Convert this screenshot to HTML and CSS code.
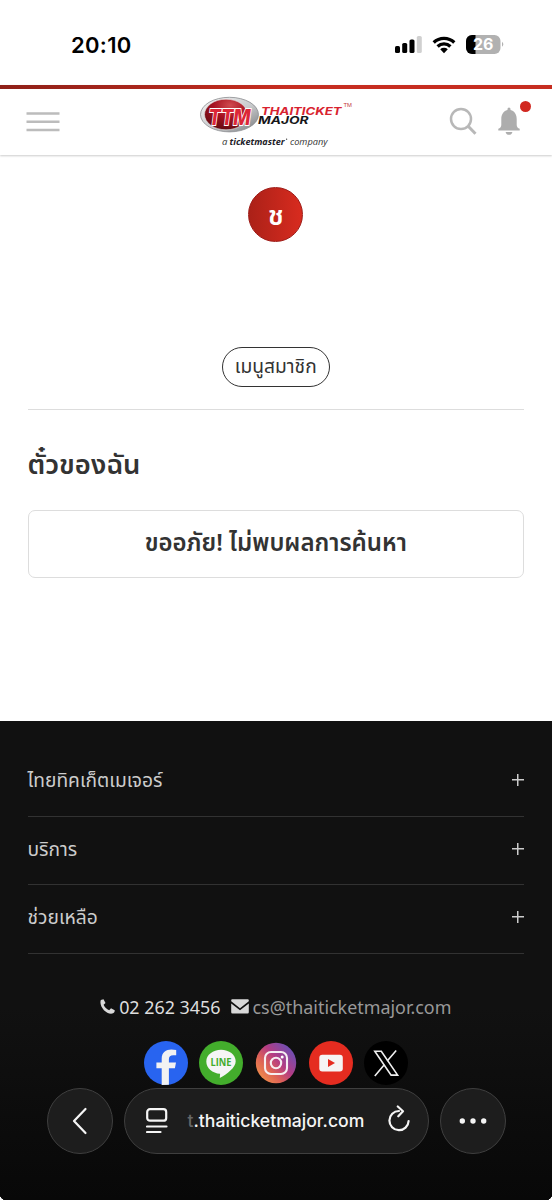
FILE: index.html
```html
<!DOCTYPE html>
<html lang="th">
<head>
<meta charset="utf-8">
<meta name="viewport" content="width=device-width">
<title>ThaiTicketMajor</title>
<link rel="stylesheet" href="styles.css">
</head>
<body>
<div class="screen">
  <div class="status">
    <span class="time">20:10</span>
    <div class="status-icons">
      <svg class="signal" width="28" height="19" viewBox="0 0 28 19"><rect x="0" y="11" width="5" height="7" rx="1.6"/><rect x="7.2" y="8" width="5" height="10" rx="1.6"/><rect x="14.5" y="4.5" width="5" height="13.5" rx="1.6"/><rect x="21.8" y="1" width="5" height="17" rx="1.6" fill="#d0d0d0"/></svg>
      <svg class="wifi" width="24" height="18" viewBox="0 0 24 18"><g fill="none" stroke="#000" stroke-width="3.3"><path d="M1.7 6.5a14.8 14.8 0 0 1 20.6 0"/><path d="M5.6 10.5a9.2 9.2 0 0 1 12.8 0"/></g><path d="M8.2 13.2a5.6 5.6 0 0 1 7.6 0L12 17.2z"/></svg>
      <svg class="battery" width="39" height="20" viewBox="0 0 39 20"><defs><clipPath id="bat"><rect width="34.5" height="19" rx="6"/></clipPath></defs><g clip-path="url(#bat)"><rect width="35" height="19" fill="#b1b1b1"/><rect width="9.5" height="19"/></g><path d="M36 6.800q2.700 2.500 0 5z" fill="#b1b1b1"/><text x="17.2" y="15.3" text-anchor="middle" class="bat-num">26</text></svg>
    </div>
  </div>
  <header class="header">
    <svg class="menu" width="34" height="22" viewBox="0 0 34 22"><path d="M.5 2.500h33M.5 10.800h33M.5 19h33" stroke="#bcbcbc" stroke-width="2.5"/></svg>
    <svg class="logo" width="154" height="54" viewBox="0 0 154 54">
      <defs>
        <linearGradient id="silver" x1="0" y1="0" x2="1" y2="1"><stop offset="0" stop-color="#f5f5f5"/><stop offset=".55" stop-color="#c9cbcd"/><stop offset="1" stop-color="#77797c"/></linearGradient>
        <radialGradient id="ball" cx=".6" cy=".2" r=".8"><stop offset="0" stop-color="#d04a4f"/><stop offset=".5" stop-color="#a61220"/><stop offset="1" stop-color="#650b12"/></radialGradient>
      </defs>
      <ellipse cx="29.500" cy="18.600" rx="29" ry="17.300" fill="url(#silver)" stroke="#8b8d90" stroke-width=".8"/>
      <ellipse cx="26" cy="18.500" rx="21.500" ry="15.300" fill="url(#ball)" stroke="#e7e7e7" stroke-width=".6"/>
      <text x="8.500" y="28.600" class="emblem" textLength="42" lengthAdjust="spacingAndGlyphs">TTM</text>
      <g class="wordmark"><text x="61" y="18.800" textLength="80.500" lengthAdjust="spacingAndGlyphs" fill="#d8232f">THAITICKET</text><text x="58" y="27.700" textLength="50.500" lengthAdjust="spacingAndGlyphs" fill="#17171a">MAJOR</text></g>
      <text x="143.500" y="10.500" class="tm" textLength="8.500" lengthAdjust="spacingAndGlyphs">TM</text>
      <g class="tagline"><text x="22" y="48.500">a</text><text x="29.500" y="48.500" class="tagbold" textLength="55" lengthAdjust="spacingAndGlyphs">ticketmaster</text><circle cx="86.600" cy="43.200" r=".65"/><text x="90" y="48.500" textLength="37.500" lengthAdjust="spacingAndGlyphs">company</text></g>
    </svg>
    <div class="tools">
      <svg width="29" height="29" viewBox="0 0 29 29" fill="none" stroke="#b8b8b8"><circle cx="12" cy="12" r="10" stroke-width="2.5"/><path d="M19.200 19.200l7.300 7.500" stroke-width="3"/></svg>
      <svg class="bell" width="22" height="29" viewBox="0 0 22 29" fill="#adadad"><path d="M9.500 3V2a1.500 1.500 0 0 1 3 0v1C17 4 18.700 8 18.700 12v6c0 2 1.300 3.200 3 3.800v1.600H.3v-1.600c1.700-.6 3-1.800 3-3.800v-6C3.300 8 5 4 9.500 3zM7.600 25h6.800c-.7 3.800-6.100 3.800-6.800 0z"/></svg>
      <i class="dot"></i>
    </div>
  </header>
  <main class="main">
    <div class="avatar">ช</div>
    <button class="member">เมนูสมาชิก</button>
    <section class="tickets"><h1>ตั๋วของฉัน</h1><div class="empty">ขออภัย! ไม่พบผลการค้นหา</div></section>
  </main>
  <footer class="footer">
    <nav>
      <div class="row"><span>ไทยทิคเก็ตเมเจอร์</span><i class="plus"></i></div>
      <div class="row"><span>บริการ</span><i class="plus"></i></div>
      <div class="row"><span>ช่วยเหลือ</span><i class="plus"></i></div>
    </nav>
    <div class="contact">
      <svg width="15" height="15" viewBox="0 0 15 15"><path d="M.8.9L3.500.2l2 3.800-1.900 1.700c1 2.400 3 4.400 5.600 5.500l1.800-2 3.700 2c.1 1.200-.3 2.300-1.200 2.900C8.200 17.400-1.600 8.100.8.900z" fill="#d9d9d9"/></svg>
      <span class="phone">02 262 3456</span>
      <svg class="mail" width="18" height="15" viewBox="0 0 18 15"><path d="M1.200.3h15.600q1 0 1 1v1L9 9.200.2 2.300v-1q0-1 1-1zM.2 4.500L9 11.300l8.800-6.800v8.800q0 1.200-1.200 1.200H1.400Q.2 14.500.2 13.300z" fill="#d9d9d9"/></svg>
      <span class="email">cs@thaiticketmajor.com</span>
    </div>
    <div class="social">
      <svg viewBox="0 0 44 44"><circle cx="22" cy="22" r="22" fill="#2864f0"/><path d="M17.700 44V27.300h-5.300v-5.900h5.300v-3.500C17.700 11.200 22 8.500 27.300 8.500q2.500 0 4.900.6v5.100h-3q-4.300 0-4.300 4v3.200h7.100l-1.100 5.900h-6v16.500z" fill="#f2f2f2"/></svg>
      <svg viewBox="0 0 44 44"><circle cx="22" cy="22" r="22" fill="#43ad2c"/><path d="M22 8.800c8.200 0 14.700 5.100 14.700 11.500 0 6.600-8.900 12.800-15.900 16.700l.3-4.300C13.500 32.200 7.300 27 7.300 20.400 7.300 14 14 8.800 22 8.800z" fill="#f5f5f5"/><text x="22" y="24.700" text-anchor="middle" class="line-word" textLength="21" lengthAdjust="spacingAndGlyphs">LINE</text></svg>
      <svg viewBox="0 0 44 44"><defs><linearGradient id="insta" x1="0" y1=".9" x2=".9" y2=".1"><stop offset="0" stop-color="#f59a47"/><stop offset=".35" stop-color="#de6256"/><stop offset=".6" stop-color="#b43c83"/><stop offset="1" stop-color="#6651b9"/></linearGradient></defs><circle cx="22" cy="22" r="20.200" fill="url(#insta)"/><g fill="none" stroke="#f6eef1" stroke-width="2.100"><rect x="11" y="11" width="22" height="22" rx="6"/><circle cx="22" cy="22" r="5.200"/></g><circle cx="28.200" cy="15.900" r="1.500" fill="#fff"/></svg>
      <svg viewBox="0 0 44 44"><circle cx="22" cy="22" r="22" fill="#e52c20"/><rect x="10.300" y="13.800" width="23.500" height="16.700" rx="3" fill="#f6f4f4"/><path d="M19 18v8l7-4z" fill="#e52c20"/></svg>
      <svg viewBox="0 0 44 44"><circle cx="22" cy="22" r="22"/><g fill="none" stroke="#f0f0f0" stroke-width="1.600"><path d="M10.800 10.200h6.500l16.300 23.900h-6.500z"/><path d="M32.200 9.400l-9 10.500M20.300 23.800l-9.500 11.100"/></g></svg>
    </div>
  </footer>
  <div class="browser">
    <div class="glass round"><svg width="16" height="28" viewBox="0 0 16 28"><path d="M13.500 2L2 14l11.500 12" /></svg></div>
    <div class="glass address">
      <svg class="reader" width="22" height="26" viewBox="0 0 22 26"><rect x="1.200" y="1.200" width="19" height="11.500" rx="2.800"/><path d="M1 18.500h19.500M1 24h13.500"/></svg>
      <span class="url"><span class="fade">t</span>.thaiticketmajor.com</span>
      <svg class="reload" width="24" height="28" viewBox="0 0 24 28"><path d="M12 6A9.600 9.600 0 1 0 21.600 16M10.800 1.500L16 6.200l-4.700 5.100"/></svg>
    </div>
    <div class="glass round"><svg width="28" height="8" viewBox="0 0 28 8"><g class="dots"><circle cx="3.300" cy="4" r="2.700"/><circle cx="14" cy="4" r="2.700"/><circle cx="24.700" cy="4" r="2.700"/></g></svg></div>
  </div>
  <i class="corner left"></i><i class="corner right"></i>
</div>
</body>
</html>
```

FILE: styles.css
```css
* { box-sizing: border-box; }
body { margin: 0; background: #fff; font-family: "Noto Sans", "Noto Sans Thai", sans-serif; color: #333; }
.screen { position: relative; width: 552px; height: 1200px; display: flex; flex-direction: column; overflow: hidden; }
svg { display: block; flex: none; }
.status { height: 85px; padding: 31px 47px 0 71px; display: flex; justify-content: space-between; align-items: flex-start; }
.time { font: 600 22px/28px Inter, sans-serif; letter-spacing: .3px; color: #000; }
.status-icons { display: flex; align-items: center; height: 27px; }
.wifi { margin-left: 9px; }
.battery { margin-left: 10px; }
.bat-num { font: 700 16px Inter, sans-serif; fill: #fff; }
.header { height: 70px; border-top: 4px solid; border-image: linear-gradient(90deg, #8e2018, #c62d20 52%, #c62d20) 1; box-shadow: 0 1px 2px #ccc; padding: 0 20px 0 26px; display: flex; justify-content: space-between; align-items: flex-start; }
.menu { margin-top: 22px; }
.logo { margin: 7px -5px 0 39px; overflow: visible; }
.emblem { font: italic 800 22px Inter, sans-serif; fill: #dc2737; stroke: #fff; stroke-width: 1.800px; paint-order: stroke; }
.wordmark { font: italic 700 10.500px Inter, sans-serif; }
.tm { font: 5px "Liberation Sans", sans-serif; fill: #c43840; }
.tagline { font: italic 9.500px "Open Sans", sans-serif; fill: #333; }
.tagbold { font-weight: 700; fill: #202027; }
.tools { display: flex; position: relative; padding-top: 18px; width: 83px; gap: 20px; }
.dot { position: absolute; width: 11px; height: 11px; border-radius: 50%; right: 1px; top: 12px; background: #d12820; }
.main { height: 566px; padding: 32px 28px 0 27.500px; display: flex; flex-direction: column; align-items: center; }
.avatar { width: 55px; height: 55px; border-radius: 50%; border: 1px solid #9e1b17; background: linear-gradient(90deg, #ab2118, #d82b1f); color: #fff; font-size: 27px; font-weight: 600; line-height: 53px; text-align: center; }
.member { margin-top: 105px; width: 108px; height: 40px; border: 1.500px solid #333; border-radius: 20px; background: #fff; padding: 0 0 3px; color: #333; font: 19.200px/31px "Noto Sans", "Noto Sans Thai", sans-serif; white-space: nowrap; }
.tickets { margin-top: 22px; width: 100%; border-top: 1.500px solid #ddd; }
h1 { margin: 35px 0 28px; font-size: 27.400px; line-height: 37px; font-weight: 600; white-space: nowrap; }
.empty { height: 68px; border: 1.500px solid #ddd; border-radius: 7px; text-align: center; font-size: 24px; font-weight: 600; line-height: 61px; white-space: nowrap; }
.footer { height: 479px; background: linear-gradient(#111 0, #111 60%, #080808 100%); padding: 27px 28px 0 27.500px; }
.row { height: 68.700px; border-bottom: 1.500px solid #323232; display: flex; align-items: center; justify-content: space-between; font-size: 19.200px; line-height: 62px; padding-bottom: 4px; color: #ccc; white-space: nowrap; }
.plus { width: 12px; height: 12px; background: linear-gradient(#ccc, #ccc) center / 12px 1.500px no-repeat, linear-gradient(#ccc, #ccc) center / 1.500px 12px no-repeat; }
.contact { margin-top: 39px; display: flex; justify-content: center; align-items: center; height: 27px; gap: 4px; font-size: 17.900px; white-space: nowrap; }
.phone { color: #ddd; }
.email { color: #999; }
.mail { margin-left: 6px; }
.social { margin-top: 21px; display: flex; justify-content: center; gap: 11px; }
.social svg { width: 44px; height: 44px; }
.line-word { font: 700 11px "Open Sans", sans-serif; fill: #43ad2c; }
.browser { position: absolute; left: 46.500px; top: 1087.500px; width: 459px; display: flex; gap: 11px; }
.glass { height: 66px; background: #1d1d1d; border: 1px solid #3f3f3f; border-radius: 33px; display: flex; align-items: center; justify-content: center; }
.round { width: 66px; }
.address { width: 305px; justify-content: flex-start; padding-left: 21px; }
.glass svg { fill: none; stroke: #f5f5f5; stroke-width: 2.200; stroke-linecap: round; stroke-linejoin: round; }
.glass .dots { fill: #f5f5f5; stroke: none; }
.url { margin-left: 20px; width: 178px; font: 500 17.600px/26px Inter, sans-serif; color: #f5f5f5; white-space: nowrap; }
.fade { color: #666; }
.reload { margin-left: 21px; margin-top: -3px; }
.corner { position: absolute; bottom: 0; width: 6px; height: 6px; }
.left { left: 0; background: radial-gradient(circle at 100% 0, transparent 6px, #fff 6.500px); }
.right { right: 0; background: radial-gradient(circle at 0 0, transparent 6px, #fff 6.500px); }
```
